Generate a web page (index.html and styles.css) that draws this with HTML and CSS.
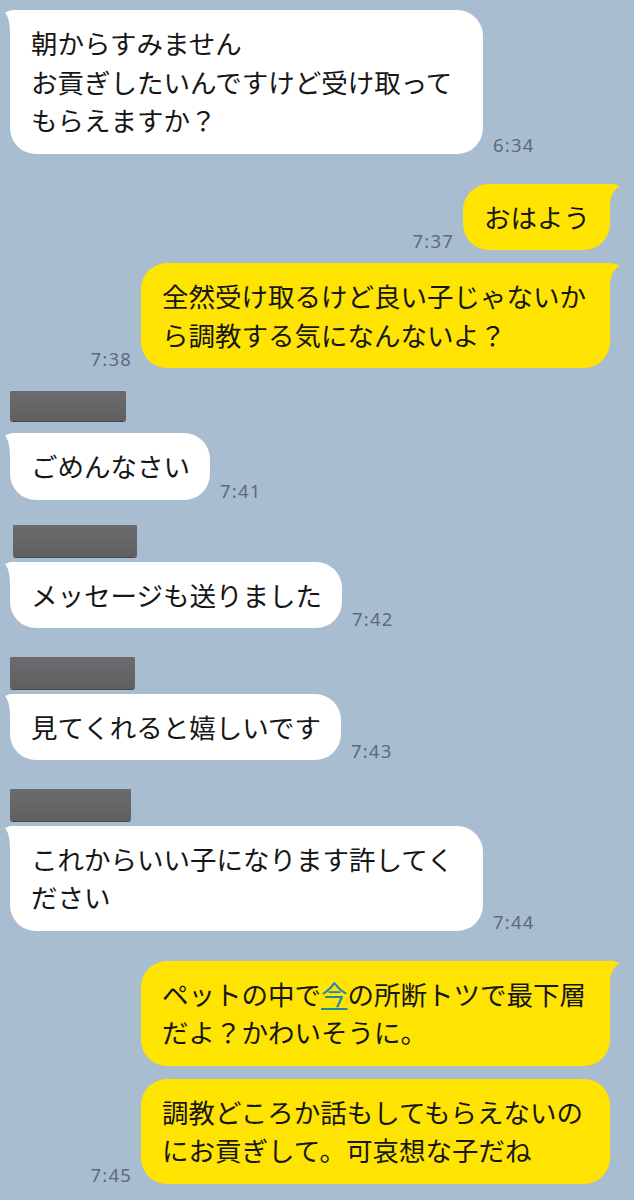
FILE: index.html
```html
<!DOCTYPE html>
<html lang="ja">
<head>
    <meta charset="UTF-8">
    <title>トーク</title>
    <link rel="stylesheet" href="styles.css">
</head>
<body>
    <div class="chat">
        <div class="row in">
            <div class="bubble tail">朝からすみません<br>お貢ぎしたいんですけど受け取ってもらえますか？</div>
            <span class="time">6:34</span>
        </div>

        <div class="row out gap-large">
            <span class="time">7:37</span>
            <div class="bubble tail">おはよう</div>
        </div>

        <div class="row out gap-small">
            <span class="time">7:38</span>
            <div class="bubble tail">全然受け取るけど良い子じゃないから調教する気になんないよ？</div>
        </div>

        <!-- redacted sender names -->
        <div class="name name-1"></div>
        <div class="row in after-name">
            <div class="bubble tail">ごめんなさい</div>
            <span class="time">7:41</span>
        </div>

        <div class="name name-2"></div>
        <div class="row in after-name-tight">
            <div class="bubble tail">メッセージも送りました</div>
            <span class="time">7:42</span>
        </div>

        <div class="name name-3"></div>
        <div class="row in after-name-tight">
            <div class="bubble tail">見てくれると嬉しいです</div>
            <span class="time">7:43</span>
        </div>

        <div class="name name-4"></div>
        <div class="row in after-name-tight">
            <div class="bubble tail">これからいい子になります許してください</div>
            <span class="time">7:44</span>
        </div>

        <div class="row out gap-large">
            <div class="bubble tail">ペットの中で<span class="link">今</span>の所断トツで最下層だよ？かわいそうに。</div>
        </div>

        <div class="row out gap-small">
            <span class="time">7:45</span>
            <div class="bubble">調教どころか話もしてもらえないのにお貢ぎして。可哀想な子だね</div>
        </div>
    </div>
</body>
</html>
```

FILE: styles.css
```css
/* Chat screen */
body {
    margin: 0;
    background-color: #a9bdd1;
    font-family: "Noto Sans CJK JP", "Noto Sans", sans-serif;
}

.chat {
    padding: 10px 24px 0 10px;
}

.row {
    display: flex;
    align-items: flex-end;
}

.row.out {
    justify-content: flex-end;
}

.gap-large {
    margin-top: 30px;
}

.gap-small {
    margin-top: 13px;
}

.after-name {
    margin-top: 12px;
}

.after-name-tight {
    margin-top: 5px;
}

/* Bubbles */
.bubble {
    position: relative;
    padding: 14px 20px 14px 21px;
    box-sizing: border-box;
    border-radius: 26px;
    font-size: 26.5px;
    line-height: 38.5px;
    color: #161616;
}

.in .bubble {
    max-width: 473px;
    background-color: #ffffff;
}

.out .bubble {
    max-width: 469px;
    background-color: #fee400;
}

.in .bubble.tail {
    border-top-left-radius: 4px;
}

.out .bubble.tail {
    border-top-right-radius: 4px;
}

.bubble.tail::before {
    content: "";
    position: absolute;
    top: 0;
    width: 20px;
    height: 24px;
    background: inherit;
}

.in .bubble.tail::before {
    left: -5px;
    clip-path: path('M0 2.5 Q4 0 10 0 L20 0 L20 24 L5 24 C5 12 3 6 0 2.5 Z');
}

.out .bubble.tail::before {
    right: -10px;
    width: 25px;
    clip-path: path('M25 2.5 Q20 0 12 0 L0 0 L0 24 L15 24 C15 12 19 6 25 2.5 Z');
}

.link {
    color: #2587a6;
    text-decoration: underline;
    text-underline-offset: 3px;
}

/* Timestamps */
.time {
    font-family: "Noto Sans", sans-serif;
    font-size: 18.5px;
    line-height: 20px;
    letter-spacing: 1.2px;
    color: #5d6a78;
    margin-bottom: -1px;
}

.in .time {
    margin-left: 10px;
}

.out .time {
    margin-right: 9px;
}

/* Redacted name bars */
.name {
    height: 31px;
    background: linear-gradient(#6c6c6f, #5f5f62);
    border-radius: 1px 1px 3px 3px;
    box-shadow: 0 1px 0 #48484b;
}

.name-1 {
    width: 116px;
    height: 30px;
    margin-top: 23px;
}

.name-2 {
    width: 124px;
    height: 32px;
    margin-top: 25px;
    margin-left: 3px;
}

.name-3 {
    width: 125px;
    height: 32px;
    margin-top: 28.5px;
}

.name-4 {
    width: 121px;
    height: 32px;
    margin-top: 28.5px;
}
```
